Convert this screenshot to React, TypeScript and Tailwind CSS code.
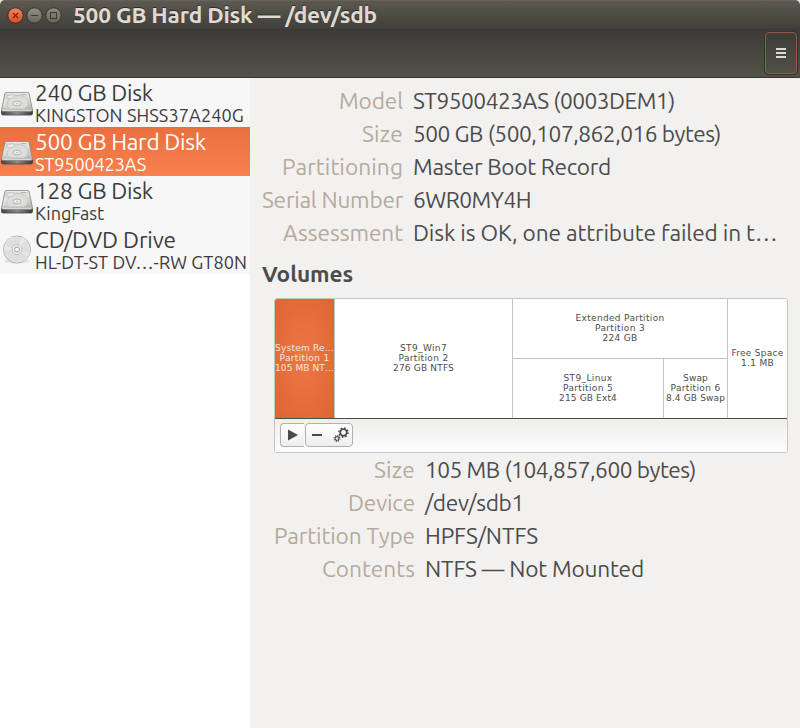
import { useLayoutEffect, useRef, useState } from "react";

/* One line of text, tracked so that it fills the given width. */
function Fit({ w, children, className = "" }: { w: number; children: string; className?: string }) {
  const ref = useRef<HTMLSpanElement>(null);
  const [spacing, setSpacing] = useState(0);
  useLayoutEffect(() => {
    if (ref.current) {
      setSpacing((w - ref.current.getBoundingClientRect().width) / children.length);
    }
  }, []);
  return (
    <span className={`block shrink-0 whitespace-pre ${className}`} style={{ width: w }}>
      <span ref={ref} className="inline-block" style={{ letterSpacing: spacing }}>
        {children}
      </span>
    </span>
  );
}

function HardDiskIcon() {
  return (
    <svg width="34" height="26" viewBox="0 0 34 26">
      <defs>
        <linearGradient id="hd-top" x1="0" y1="0" x2="0.4" y2="1">
          <stop offset="0" stopColor="#cfcfcd" />
          <stop offset="0.5" stopColor="#e2e2e1" />
          <stop offset="1" stopColor="#bebebc" />
        </linearGradient>
        <linearGradient id="hd-front" x1="0" y1="0" x2="1" y2="0">
          <stop offset="0" stopColor="#444" />
          <stop offset="0.5" stopColor="#8c8c8c" />
          <stop offset="1" stopColor="#3a3a3a" />
        </linearGradient>
      </defs>
      <path d="M1.500 19.500h31v3q0 1.500-1.500 1.500H3q-1.500 0-1.500-1.500z" fill="url(#hd-front)" stroke="#444" strokeWidth="0.8" />
      <path d="M6.200 1.500h21.600q1 0 1.300 1l3.400 16.500q0 1.200-1.200 1.200H2.700q-1.200 0-1.200-1.200L4.900 2.500q.3-1 1.300-1z" fill="url(#hd-top)" stroke="#858583" strokeWidth="0.8" />
      <path d="M6.300 2.400h21.400" stroke="#f5f5f5" strokeWidth="0.7" />
      <path d="M8 10q2-5.500 10-5.500 8.500 0 10 6 .5 6-5 7.500H10q-5-3-2-8z" fill="#dcdcdb" stroke="#bdbdbb" strokeWidth="0.7" />
      <ellipse cx="17" cy="12.500" rx="4" ry="2.400" fill="#ededed" stroke="#a6a6a4" strokeWidth="0.8" />
      <ellipse cx="17" cy="12.600" rx="1.500" ry="0.800" fill="#c4c4c3" />
      <path d="M7 4.500l6-.8 1.600 1.500-2 2.300H7.200z" fill="#e8e8e8" stroke="#b4b4b2" strokeWidth="0.6" />
      <path d="M21 3.500h5M4 17.500h2M28 17.500h2" stroke="#a8a8a6" strokeWidth="0.8" />
      <path d="M3 19.600h28" stroke="#f0f0f0" strokeWidth="0.7" />
    </svg>
  );
}

function DiscIcon() {
  return (
    <svg width="34" height="34" viewBox="0 0 34 34">
      <ellipse cx="17" cy="29" rx="13" ry="2.500" fill="#e4e4e4" />
      <circle cx="17" cy="17.500" r="13.500" fill="#dededd" stroke="#a5a5a3" strokeWidth="0.9" />
      <g transform="translate(0 1)">
        <path d="M17 16.500L6 9a13 13 0 0 1 4-4z" fill="#d5dfe8" />
        <path d="M17 16.500L10 5a13 13 0 0 1 4-1.500z" fill="#e6e0da" />
        <path d="M17 16.500L28 24a13 13 0 0 1-4 4z" fill="#e3d9e4" />
        <path d="M17 16.500L29.800 20a13 13 0 0 1-1.800 4z" fill="#ece6d8" />
        <path d="M17 16.500L4 17a13 13 0 0 1 .5-4z" fill="#e9e9e8" />
        <path d="M17 16.500L22 4.500a13 13 0 0 1 4 2.500z" fill="#e9e9e9" />
        <circle cx="17" cy="16.500" r="12.600" fill="none" stroke="#ececec" strokeWidth="0.7" />
        <circle cx="17" cy="16.500" r="5" fill="#eaeaea" stroke="#b9b9b8" strokeWidth="0.8" />
        <circle cx="17" cy="16.500" r="2.400" fill="#fafafa" stroke="#999" strokeWidth="0.9" />
      </g>
    </svg>
  );
}

function WindowButton({ kind }: { kind: "close" | "min" | "max" }) {
  const close = kind === "close";
  return (
    <svg width="17" height="17" viewBox="0 0 17 17">
      <defs>
        <linearGradient id={`wb-${kind}`} x1="0" y1="0" x2="0" y2="1">
          <stop offset="0" stopColor={close ? "#f68560" : "#92908a"} />
          <stop offset="1" stopColor={close ? "#dd4a1b" : "#66645d"} />
        </linearGradient>
      </defs>
      <circle cx="8.500" cy="8.500" r="7.700" fill={`url(#wb-${kind})`} stroke="#34332e" strokeWidth="1" />
      {close && <path d="M5.800 5.800l5.400 5.400M11.200 5.800l-5.400 5.400" stroke="#4f2413" strokeWidth="1.100" />}
      {kind === "min" && <path d="M5 8.500h7" stroke="#3a3934" strokeWidth="1.200" />}
      {kind === "max" && <rect x="5.500" y="5.500" width="6" height="6" fill="none" stroke="#3a3934" strokeWidth="1.100" />}
    </svg>
  );
}

function GearsIcon() {
  return (
    <svg width="16" height="16" viewBox="0 0 16 16" fill="none" stroke="#4a4a4a">
      <circle cx="10.500" cy="5.500" r="3.300" strokeWidth="1.700" />
      <circle cx="10.500" cy="5.500" r="4.600" strokeWidth="1.500" strokeDasharray="1.600 2.013" />
      <circle cx="4" cy="11.500" r="1.900" strokeWidth="1.100" />
      <circle cx="4" cy="11.500" r="2.900" strokeWidth="1.100" strokeDasharray="1.100 1.178" />
    </svg>
  );
}

const disks = [
  { name: "240 GB Disk", nw: 118, sub: "KINGSTON SHSS37A240G", sw: 209 },
  { name: "500 GB Hard Disk", nw: 171, sub: "ST9500423AS", sw: 111, selected: true },
  { name: "128 GB Disk", nw: 118, sub: "KingFast", sw: 69 },
  { name: "CD/DVD Drive", nw: 141, sub: "HL-DT-ST DV…-RW GT80N", sw: 212, disc: true },
];

type Item = [string, number, string, number];

const driveInfo: Item[] = [
  ["Model", 64, "ST9500423AS (0003DEM1)", 262],
  ["Size", 41, "500 GB (500,107,862,016 bytes)", 308],
  ["Partitioning", 121, "Master Boot Record", 198],
  ["Serial Number", 141, "6WR0MY4H", 118],
  ["Assessment", 120, "Disk is OK, one attribute failed in t…", 364.5],
];

const volumeInfo: Item[] = [
  ["Size", 41, "105 MB (104,857,600 bytes)", 271],
  ["Device", 67, "/dev/sdb1", 99],
  ["Partition Type", 141, "HPFS/NTFS", 113],
  ["Contents", 93, "NTFS — Not Mounted", 219],
];

function InfoRows({ items, className }: { items: Item[]; className: string }) {
  return (
    <div className={className}>
      {items.map(([label, lw, value, vw]) => (
        <div key={label} className="flex h-[33px] gap-[10px] text-[22.67px] leading-[33px]">
          <div className="flex w-[141px] justify-end text-[#b5aa9b]">
            <Fit w={lw}>{label}</Fit>
          </div>
          <Fit w={vw} className="text-[#4c4c4c]">{value}</Fit>
        </div>
      ))}
    </div>
  );
}

function Cell({ lines, className = "" }: { lines: [string, number][]; className?: string }) {
  return (
    <div className={`flex flex-col items-center justify-center pb-[2px] font-['DejaVu_Sans'] text-[9px] leading-[10px] text-[#4c4c4c] ${className}`}>
      {lines.map(([text, w]) => (
        <Fit key={text} w={w}>{text}</Fit>
      ))}
    </div>
  );
}

export default function App() {
  return (
    <div className="flex h-[728px] w-[800px] flex-col overflow-hidden bg-[#dfe3e6] font-['Ubuntu','Noto_Sans',sans-serif]">
      <header className="h-[78px] shrink-0 overflow-hidden rounded-t-[5px]">
        <div className="flex h-[29px] items-center border-t border-[#64625a] bg-linear-to-b from-[#5b5950] to-[#403f3a] pl-[7px]">
          <div className="flex gap-[2px]">
            <WindowButton kind="close" />
            <WindowButton kind="min" />
            <WindowButton kind="max" />
          </div>
          <Fit w={304} className="ml-[11px] h-[28px] text-[22.67px] leading-[27px] font-bold text-[#dfdbd2] [text-shadow:0_-1px_0_#2e2d29]">
            500 GB Hard Disk — /dev/sdb
          </Fit>
        </div>
        <div className="flex h-[49px] items-start justify-end border-t border-b border-t-[#393834] border-b-[#34332f] bg-linear-to-b from-[#3c3b37] to-[#535148] pt-[2px] pr-[3px]">
          <button className="flex h-[42px] w-[32px] flex-col items-center justify-center gap-[2px] rounded-[4px] border border-[#955b42] outline outline-[#34332e]">
            <span className="h-[2px] w-[10px] bg-[#dfdbd2]" />
            <span className="h-[2px] w-[10px] bg-[#dfdbd2]" />
            <span className="h-[2px] w-[10px] bg-[#dfdbd2]" />
          </button>
        </div>
      </header>

      <div className="flex grow">
        <aside className="w-[250px] shrink-0 bg-white">
          {disks.map((d) => (
            <div
              key={d.name}
              className={`flex h-[49px] ${d.selected ? "bg-linear-to-b from-[#e96f3e] to-[#f7814f] text-white" : "bg-[#f7f7f7] text-[#3c3c3c]"}`}
            >
              <div className={`flex w-[35px] shrink-0 items-center ${d.disc ? "pb-[1px]" : "pt-[3px]"}`}>
                {d.disc ? <DiscIcon /> : <HardDiskIcon />}
              </div>
              <div>
                <Fit w={d.nw} className="h-[28px] text-[22.67px] leading-[30px]">{d.name}</Fit>
                <Fit w={d.sw} className="h-[20px] text-[18.1px] leading-[19px]">{d.sub}</Fit>
              </div>
            </div>
          ))}
        </aside>

        <main className="grow bg-[#f2f1f0] pt-[6px] pl-[12px]">
          <InfoRows items={driveInfo} className="" />
          <Fit w={91} className="mt-[8px] h-[33px] text-[22.67px] leading-[33px] font-bold text-[#4c4c4c]">Volumes</Fit>

          <div className="mt-[8px] ml-[12px] h-[155px] w-[514px] overflow-hidden rounded-[3px] border border-[#c8c6c4]">
            <div className="flex h-[120px] border-b border-[#4c4c4c] bg-white">
              <Cell
                className="w-[59px] bg-radial from-[#ee7845] to-[#dc6533] text-[#fbe6dc]!"
                lines={[["System Re…", 59], ["Partition 1", 50], ["105 MB NT…", 59]]}
              />
              <Cell className="w-[179px] border-x border-[#c5c3c1]" lines={[["ST9_Win7", 47], ["Partition 2", 50], ["276 GB NTFS", 61]]} />
              <div className="flex w-[214px] flex-col">
                <Cell className="h-[59px]" lines={[["Extended Partition", 89], ["Partition 3", 50], ["224 GB", 35]]} />
                <div className="flex grow border-t border-[#c5c3c1]">
                  <Cell className="w-[150px]" lines={[["ST9_Linux", 49], ["Partition 5", 50], ["215 GB Ext4", 58]]} />
                  <Cell className="w-[64px] border-l border-[#c5c3c1]" lines={[["Swap", 25], ["Partition 6", 50], ["8.4 GB Swap", 59]]} />
                </div>
              </div>
              <Cell className="w-[60px] border-l border-[#c5c3c1]" lines={[["Free Space", 52], ["1.1 MB", 33]]} />
            </div>
            <div className="flex h-[33px] items-start bg-linear-to-b from-[#efeeed] to-[#fdfdfd] pt-[4px] pl-[5px]">
              <button className="flex h-[24px] w-[24px] items-center justify-center rounded-l-[4px] border border-r-0 border-[#b3b1af] bg-linear-to-b from-white to-[#eeedec]">
                <svg width="10" height="12" viewBox="0 0 10 12"><path d="M0 .5L10 6 0 11.500z" fill="#4a4a4a" /></svg>
              </button>
              <div className="ml-px flex h-[24px] w-[48px] items-center rounded-[4px] border border-[#b3b1af] bg-linear-to-b from-white to-[#eeedec]">
                <span className="ml-[6px] h-[2px] w-[10px] bg-[#4a4a4a]" />
                <span className="ml-[11px]"><GearsIcon /></span>
              </div>
            </div>
          </div>

          <InfoRows items={volumeInfo} className="ml-[12px]" />
        </main>
      </div>
    </div>
  );
}
